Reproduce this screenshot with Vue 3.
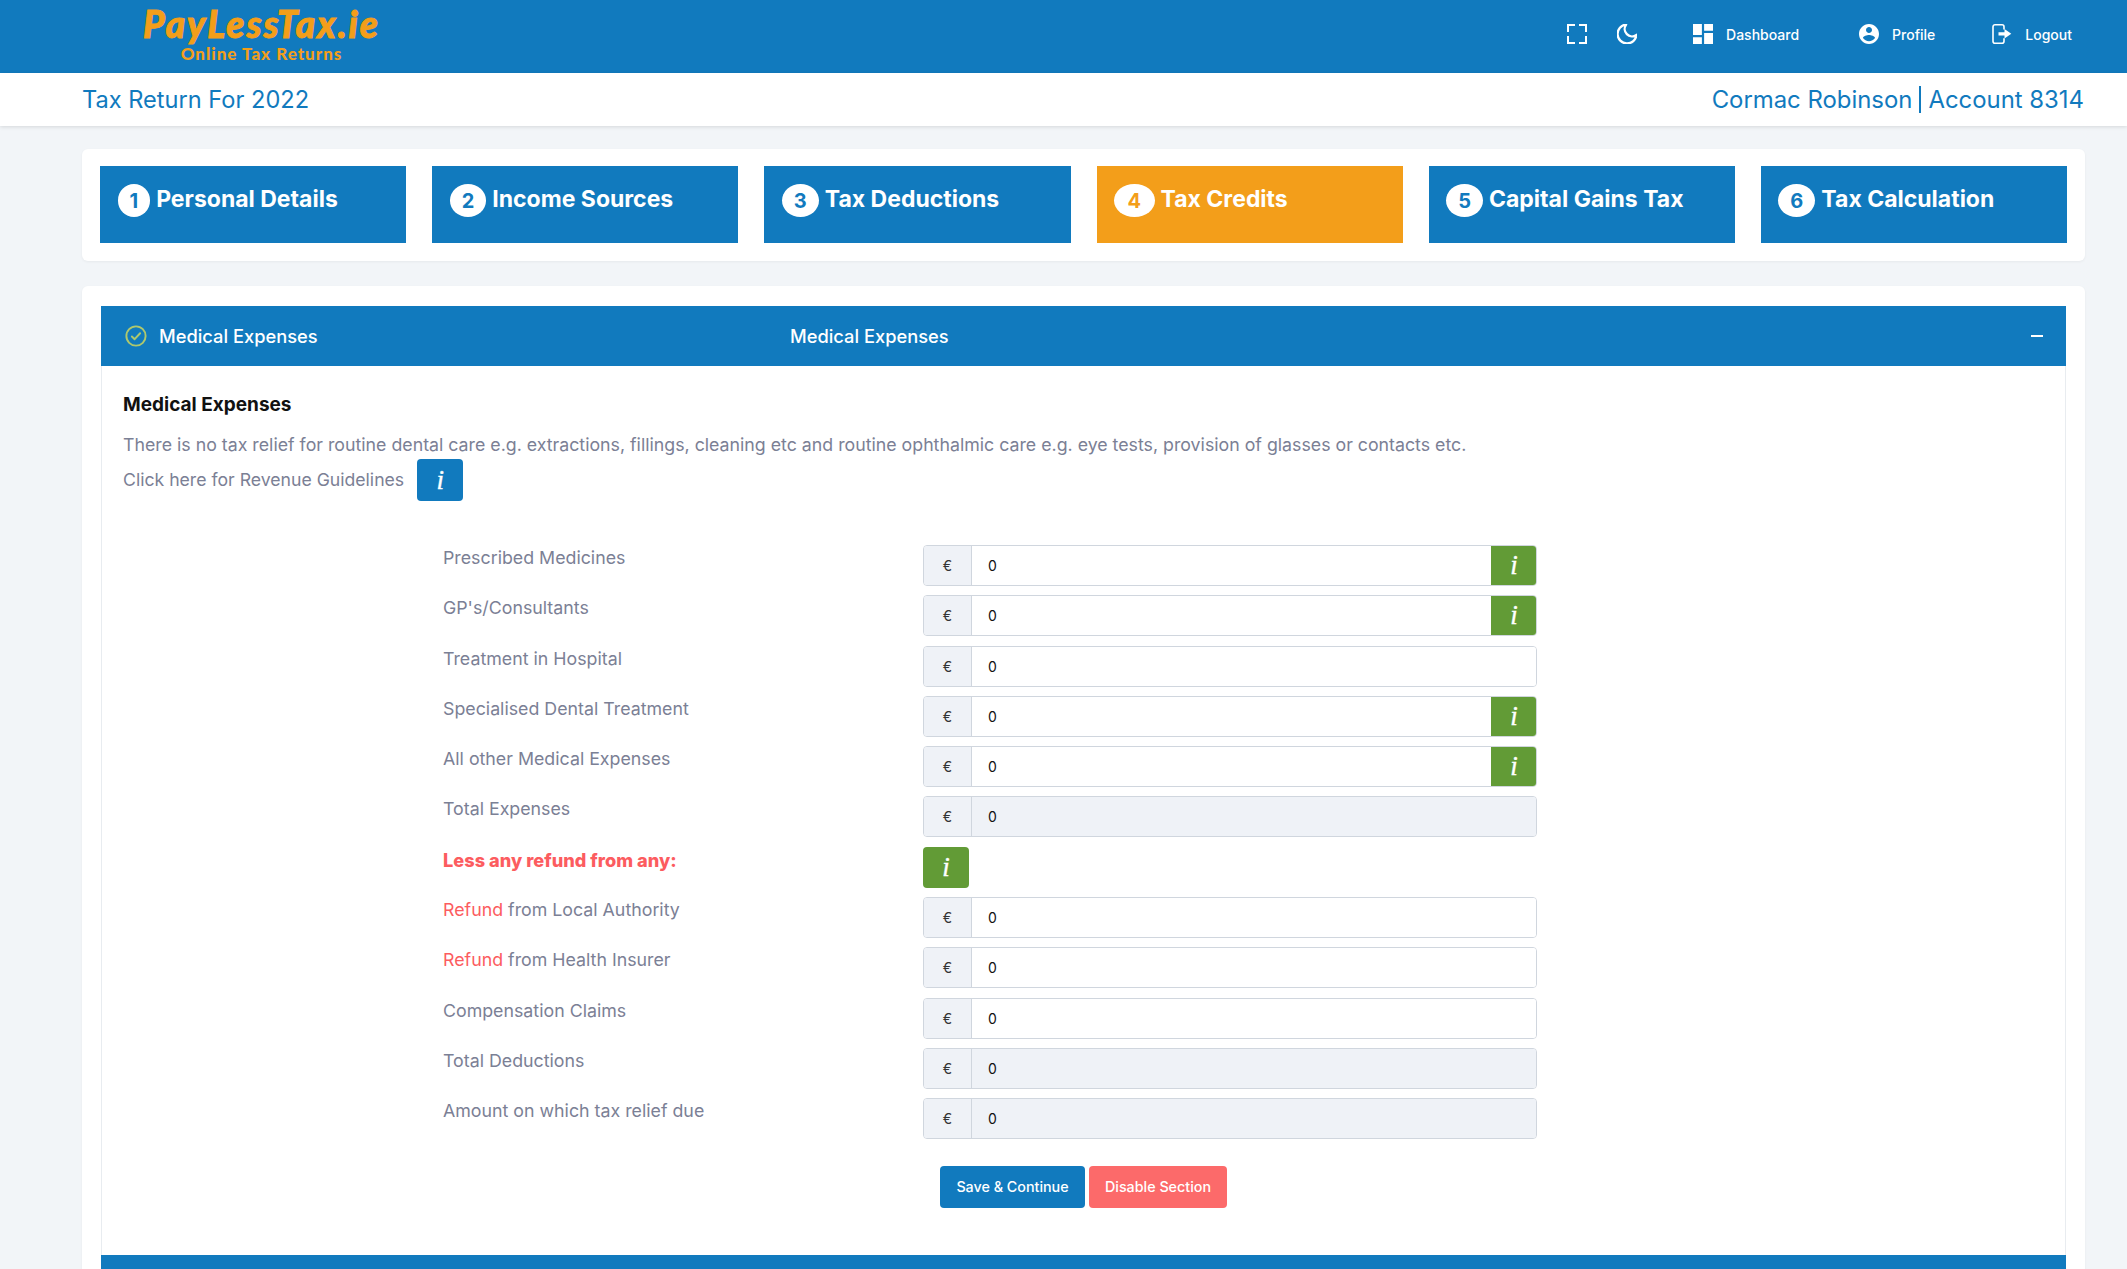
<template>
  <div class="page">
    <header class="topbar">
      <div class="logo">
        <div class="logo-main">PayLessTax.ie</div>
        <div class="logo-sub">Online Tax Returns</div>
      </div>
      <nav class="topnav">
        <svg class="ico ico-full" viewBox="0 0 20 20" fill="none" stroke="#fff" stroke-width="2">
          <path d="M1 8V1h7M12 1h7v7M19 12v7h-7M8 19H1v-7" />
        </svg>
        <svg class="ico ico-moon" viewBox="2.5 2.5 19 19" fill="none" stroke="#fff" stroke-width="2.2" stroke-linecap="round" stroke-linejoin="round">
          <path d="M21 12.8A9 9 0 1 1 11.2 3a7 7 0 0 0 9.8 9.8z" />
        </svg>
        <a class="nav-item nav-dash">
          <svg class="ico" viewBox="3 3 18 18" fill="#fff"><path d="M3 13h8V3H3v10zm0 8h8v-6H3v6zm10 0h8V11h-8v10zm0-18v6h8V3h-8z" /></svg>
          <span>Dashboard</span>
        </a>
        <a class="nav-item nav-profile">
          <svg class="ico" viewBox="2 2 20 20" fill="#fff"><path d="M12 2C6.48 2 2 6.48 2 12s4.48 10 10 10 10-4.48 10-10S17.52 2 12 2zm0 3c1.66 0 3 1.34 3 3s-1.34 3-3 3-3-1.34-3-3 1.34-3 3-3zm0 14.2c-2.5 0-4.71-1.28-6-3.22.03-1.99 4-3.08 6-3.08 1.99 0 5.97 1.09 6 3.08-1.29 1.94-3.5 3.22-6 3.22z" /></svg>
          <span>Profile</span>
        </a>
        <a class="nav-item nav-logout">
          <svg class="ico" viewBox="0 0 20 20" fill="none" stroke="#fff" stroke-width="1.6" stroke-linejoin="round">
            <path d="M12 5.5V2.8a2 2 0 0 0-2-2H3a2 2 0 0 0-2 2v14.4a2 2 0 0 0 2 2h7a2 2 0 0 0 2-2v-3" />
            <path d="M6.5 8.2h6V5l6.8 4.8-6.8 4.8v-3.2h-6z" fill="#fff" stroke="none" />
          </svg>
          <span>Logout</span>
        </a>
      </nav>
    </header>

    <div class="subbar">
      <div class="year">Tax Return For 2022</div>
      <div class="account"><span>Cormac Robinson</span><i class="bar"></i><span>Account 8314</span></div>
    </div>

    <main class="content">
      <section class="card stepper">
        <div v-for="(s, i) in steps" :key="s" class="step" :class="{ active: i === 3 }">
          <span class="num">{{ i + 1 }}</span>
          <span class="step-title">{{ s }}</span>
        </div>
      </section>

      <section class="card panel">
        <div class="acc-head">
          <svg class="check" viewBox="0 0 24 24" fill="none" stroke="#aec86e" stroke-width="2.1" stroke-linecap="round" stroke-linejoin="round">
            <circle cx="12" cy="12" r="10.5" />
            <path d="M7.5 12.5l3 3 6-6.5" />
          </svg>
          <span class="acc-left">Medical Expenses</span>
          <span class="acc-mid">Medical Expenses</span>
          <span class="minus"></span>
        </div>

        <div class="acc-body">
          <h3>Medical Expenses</h3>
          <p class="note">There is no tax relief for routine dental care e.g. extractions, fillings, cleaning etc and routine ophthalmic care e.g. eye tests, provision of glasses or contacts etc.</p>
          <div class="guide">
            <span>Click here for Revenue Guidelines</span>
            <button class="info blue"><i>i</i></button>
          </div>

          <div class="form">
            <template v-for="r in rows" :key="r.label">
              <label class="lbl" :class="{ warn: r.only }">
                <span v-if="r.refund" class="red">Refund</span>{{ r.label }}
              </label>
              <button v-if="r.only" class="info green solo"><i>i</i></button>
              <div v-else class="group" :class="{ off: r.off }">
                <span class="euro">€</span>
                <input :value="0" :readonly="true" />
                <button v-if="r.info" class="info green"><i>i</i></button>
              </div>
            </template>
          </div>

          <div class="actions">
            <button class="btn save">Save &amp; Continue</button>
            <button class="btn disable">Disable Section</button>
          </div>
        </div>

        <div class="acc-head next"></div>
      </section>
    </main>
  </div>
</template>

<script setup>
const steps = [
  'Personal Details',
  'Income Sources',
  'Tax Deductions',
  'Tax Credits',
  'Capital Gains Tax',
  'Tax Calculation',
]

const rows = [
  { label: 'Prescribed Medicines', info: true },
  { label: "GP's/Consultants", info: true },
  { label: 'Treatment in Hospital' },
  { label: 'Specialised Dental Treatment', info: true },
  { label: 'All other Medical Expenses', info: true },
  { label: 'Total Expenses', off: true },
  { label: 'Less any refund from any:', only: true },
  { label: ' from Local Authority', refund: true },
  { label: ' from Health Insurer', refund: true },
  { label: 'Compensation Claims' },
  { label: 'Total Deductions', off: true },
  { label: 'Amount on which tax relief due', off: true },
]
</script>

<style>
html, body {
  margin: 0;
  background: #f2f5f8;
  overflow: hidden;
}
</style>

<style scoped>
.page {
  height: 1269px;
  overflow: hidden;
  font-family: Inter, "Noto Sans", sans-serif;
  color: #7b8095;
}

.topbar {
  height: 73px;
  background: #117abe;
  display: flex;
  justify-content: space-between;
  padding: 0 55px 0 143px;
}

.logo {
  width: 237px;
  color: #f39e1a;
  text-align: center;
  padding-top: 2px;
}
.logo-main {
  font-family: Lato, sans-serif;
  font-weight: 900;
  font-style: italic;
  font-size: 37px;
  line-height: 43px;
  letter-spacing: 2px;
  -webkit-text-stroke: 0.9px #f39e1a;
  white-space: nowrap;
}
.logo-sub {
  font-family: Lato, sans-serif;
  font-weight: 900;
  font-size: 17px;
  line-height: 17px;
  letter-spacing: 1px;
  white-space: nowrap;
}

.topnav {
  display: flex;
  align-items: center;
  color: #fff;
  font-size: 14px;
  font-weight: 500;
  height: 68px;
}
.ico {
  width: 20px;
  height: 20px;
  flex: none;
  display: block;
}
.ico-moon {
  margin-left: 30px;
}
.nav-item {
  display: flex;
  align-items: center;
  gap: 13px;
}
.nav-dash { margin-left: 56px; }
.nav-profile { margin-left: 60px; }
.nav-logout { margin-left: 57px; }

.subbar {
  height: 53px;
  background: #fff;
  box-shadow: 0 1px 4px rgba(0, 0, 0, 0.12);
  display: flex;
  justify-content: space-between;
  align-items: center;
  padding: 0 43px 0 82px;
  color: #117abe;
  position: relative;
}
.year {
  font-size: 23.6px;
}
.account {
  display: flex;
  align-items: center;
  gap: 7px;
  font-size: 23.9px;
}
.bar {
  width: 2px;
  height: 27px;
  background: #117abe;
}

.content {
  padding: 23px 42px 0 82px;
}
.card {
  background: #fff;
  border-radius: 6px;
  box-shadow: 0 1px 3px rgba(0, 0, 0, 0.05);
}
.stepper {
  display: flex;
  gap: 26px;
  padding: 17px 18px 18px;
}
.step {
  flex: 1 1 0;
  min-width: 0;
  height: 77px;
  box-sizing: border-box;
  background: #117abe;
  color: #fff;
  display: flex;
  align-items: flex-start;
  gap: 6px;
  padding: 18px 17px 18px 17.5px;
  font-size: 23px;
  font-weight: 700;
  white-space: nowrap;
}
.step.active {
  background: #f39e1a;
}
.num {
  height: 33px;
  padding: 0 12px;
  flex: none;
  border-radius: 50%;
  background: #fff;
  color: #117abe;
  display: flex;
  align-items: center;
  justify-content: center;
  font-size: 20px;
}
.active .num {
  color: #f39e1a;
  padding: 0 13.5px;
}
.step-title {
  line-height: 30px;
}

.panel {
  margin-top: 25px;
  padding: 20px 19px 0;
}
.acc-head {
  height: 60px;
  background: #117abe;
  color: #fff;
  display: flex;
  align-items: center;
  font-size: 18.3px;
  font-weight: 500;
  padding: 0 24px;
  position: relative;
}
.check {
  width: 22px;
  height: 22px;
  flex: none;
  margin-right: 12px;
}
.acc-left {
  width: 631px;
}
.minus {
  position: absolute;
  right: 23px;
  top: 29px;
  width: 12px;
  height: 2px;
  background: #fff;
}

.acc-body {
  border: 1px solid #e8ecf0;
  border-width: 0 1px;
  padding: 26px 21px 0;
  height: 889px;
  box-sizing: border-box;
}
h3 {
  margin: 0;
  font-size: 19px;
  font-weight: 700;
  color: #111;
  line-height: 26px;
}
.note {
  margin: 15px 0 0;
  font-size: 17.75px;
  line-height: 24px;
}
.guide {
  display: flex;
  align-items: center;
  gap: 13px;
  font-size: 17.65px;
  margin-top: 2px;
}
.guide span {
  padding-bottom: 2px;
}

.info {
  width: 46px;
  height: 41px;
  border: 0;
  padding: 0;
  flex: none;
  color: #fff;
  font-family: "Liberation Serif", serif;
  font-size: 27px;
  font-weight: 400;
  -webkit-text-stroke: 0.4px #fff;
  cursor: pointer;
  border-radius: 0 4px 4px 0;
}
.info.blue {
  background: #117abe;
  height: 42px;
  border-radius: 4px;
}
.info.green {
  background: #629b36;
  margin: -1px;
  height: 41px;
}
.info.green.solo {
  margin: 0;
  border-radius: 4px;
}

.form {
  display: grid;
  grid-template-columns: 480px 614px;
  grid-auto-rows: 41px;
  row-gap: 9.3px;
  margin: 44px 0 0 320px;
}
.lbl {
  font-size: 17.8px;
  line-height: 26px;
}
.lbl.warn {
  color: #fc5c5f;
  font-weight: 800;
  font-size: 18.2px;
}
.red {
  color: #fc5c5f;
}
.group {
  display: flex;
  border: 1px solid #d0d6de;
  border-radius: 4px;
  box-sizing: border-box;
  height: 41px;
  overflow: hidden;
}
.euro {
  width: 47px;
  flex: none;
  background: #eff2f7;
  border-right: 1px solid #d0d6de;
  color: #333;
  font-size: 14px;
  display: flex;
  align-items: center;
  justify-content: center;
}
.group input {
  flex: 1;
  min-width: 0;
  border: 0;
  outline: 0;
  padding: 0 16px;
  background: #fff;
  font-family: inherit;
  font-size: 14px;
  color: #111;
}
.group.off input {
  background: #eff2f7;
}

.actions {
  display: flex;
  gap: 4px;
  margin: 27px 0 0 817px;
}
.btn {
  height: 42px;
  border: 0;
  border-radius: 4px;
  color: #fff;
  font-family: inherit;
  font-size: 14.3px;
  font-weight: 500;
  padding: 0 0 2px;
  cursor: pointer;
}
.save {
  width: 145px;
  background: #117abe;
}
.disable {
  width: 138px;
  background: #fc6a6a;
}
</style>
